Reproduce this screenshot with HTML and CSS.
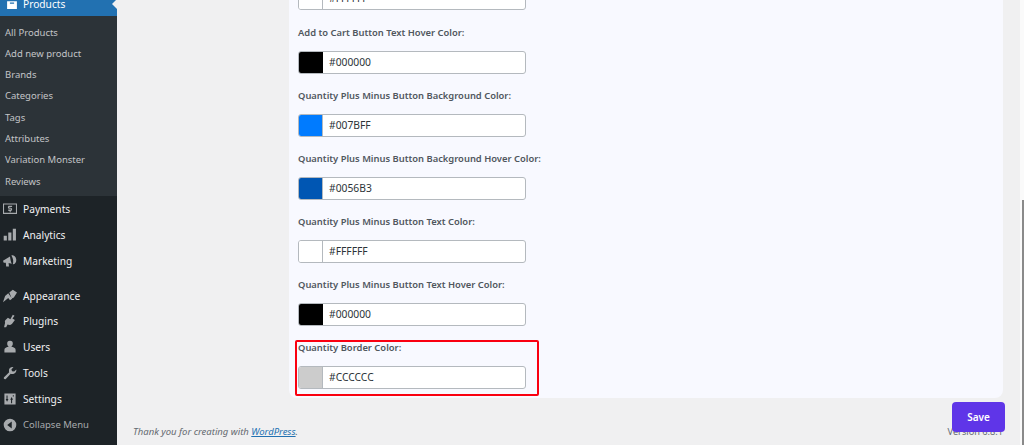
FILE: index.html
```html
<!DOCTYPE html>
<html lang="en">
<head>
<meta charset="utf-8">
<title>Settings</title>
<link rel="stylesheet" href="styles.css">
</head>
<body>
<aside class="sidebar">
  <div class="current">
    <svg class="icon" viewBox="0 0 20 20"><path d="M3 1h14v3H3zM3 6h14v11H3zM7 8v1.500h6V8z" fill-rule="evenodd"/></svg>
    <span>Products</span>
  </div>
  <ul class="submenu">
    <li>All Products</li>
    <li>Add new product</li>
    <li>Brands</li>
    <li>Categories</li>
    <li>Tags</li>
    <li>Attributes</li>
    <li>Variation Monster</li>
    <li>Reviews</li>
  </ul>
  <ul class="menu">
    <li><svg class="icon" viewBox="0 0 20 20"><path fill-rule="evenodd" d="M0 2h20v15H0zM1.500 3.500v12h17v-12zM13 5.500H9c-1.500 0-2 .8-2 2s.5 2.300 2 2.300h2.500v1H7.500v2H9.500V14.500h1.500V12.800c1.500 0 2-.8 2-2s-.5-2.500-2-2.500H9v-1h4z"/></svg>Payments</li>
    <li><svg class="icon" viewBox="0 0 20 20"><path d="M1 11h4.500v7H1zM7.500 6.500H12V18H7.500zM14 1h4.500v17H14z"/></svg>Analytics</li>
    <li class="gap"><svg class="icon" viewBox="0 0 20 20"><path d="M0 9.500l10-6c.5 3.500 1 7 2.500 10.500L8 12.800 8.500 18H4.500L4 12.500 1 12.500zM12 2c3.500-1 7 2.500 7 6.500s-2.500 6.500-5 6c1-3 1-8-2-12.500z"/></svg>Marketing</li>
    <li><svg class="icon" viewBox="0 0 20 20"><path d="M9 5l5-4 6 4-4.500 7-3 1.500zM7.500 6l5.500 8-3 2-2.500-3L0 19l3-9z"/></svg>Appearance</li>
    <li><svg class="icon" viewBox="0 0 20 20"><path d="M14 1l2.500 1.500-3 4 3.500 2-4 5.500c-2 2-4.500 2-6.500 1L4.500 19H1.500l1.500-6.500c-.8-2 0-3.300 1-4.300l3-3 3.500 2.300z"/></svg>Plugins</li>
    <li><svg class="icon" viewBox="0 0 20 20"><path d="M10 1a4 4 0 0 1 4 4.300c0 2-1 3.700-2.300 4.200 3.200.5 6.300 1.500 6.300 4.300V18H2v-4.200c0-2.800 3.100-3.800 6.300-4.300C7 9 6 7.300 6 5.300A4 4 0 0 1 10 1z"/></svg>Users</li>
    <li><svg class="icon" viewBox="0 0 20 20"><path d="M19 5l-3 3-3-.5L12 5l3-3.500c-3.500-.5-7 1.500-6.500 5.500 0 1 0 1.500.3 2L1.500 16c-1.500 1.500 1 4 2.500 2.500l7-7.300c.6.300 1.200.3 2 .3 4 0 6.500-3 6-6.500z"/></svg>Tools</li>
    <li><svg class="icon" viewBox="0 0 20 20"><path fill-rule="evenodd" d="M2 2h16v16H2zM5 5v5H3.800L5.800 14l2-4H6.500V5zM13 16v-5h1.300l-2-4-2 4h1.200v5zM14 4.500v2h1.500v-2z"/></svg>Settings</li>
    <li class="collapse"><svg class="icon" viewBox="0 0 20 20"><path fill-rule="evenodd" d="M10 1a9 9 0 1 1 0 18 9 9 0 0 1 0-18zM12.500 5L6 10l6.500 5z"/></svg>Collapse Menu</li>
  </ul>
</aside>
<main class="content">
  <section class="panel">
    <div class="field first">
      <div class="color-input"><span class="swatch white"></span><span class="value">#FFFFFF</span></div>
    </div>
    <div class="field">
      <label>Add to Cart Button Text Hover Color:</label>
      <div class="color-input"><span class="swatch black"></span><span class="value">#000000</span></div>
    </div>
    <div class="field">
      <label>Quantity Plus Minus Button Background Color:</label>
      <div class="color-input"><span class="swatch blue"></span><span class="value">#007BFF</span></div>
    </div>
    <div class="field">
      <label>Quantity Plus Minus Button Background Hover Color:</label>
      <div class="color-input"><span class="swatch darkblue"></span><span class="value">#0056B3</span></div>
    </div>
    <div class="field">
      <label>Quantity Plus Minus Button Text Color:</label>
      <div class="color-input"><span class="swatch white"></span><span class="value">#FFFFFF</span></div>
    </div>
    <div class="field">
      <label>Quantity Plus Minus Button Text Hover Color:</label>
      <div class="color-input"><span class="swatch black"></span><span class="value">#000000</span></div>
    </div>
    <div class="field highlighted">
      <label>Quantity Border Color:</label>
      <div class="color-input"><span class="swatch grey"></span><span class="value">#CCCCCC</span></div>
    </div>
  </section>
  <footer class="footer">
    <span class="thanks">Thank you for creating with <a href="#">WordPress</a>.</span>
    <span class="version">Version 6.8.1</span>
  </footer>
  <button class="save" type="button">Save</button>
</main>
<div class="scrollbar"><div class="thumb"></div></div>
</body>
</html>
```
FILE: styles.css
```css
*, *::before, *::after { box-sizing: border-box; }
html, body { height: 100%; }
body {
  margin: 0;
  height: 445px;
  overflow: hidden;
  display: flex;
  background: #f0f0f1;
  font-family: "Noto Sans", "Open Sans", sans-serif;
  color: #50575e;
}
.sidebar {
  width: 117px;
  flex: none;
  background: #1d2327;
  color: #f0f0f1;
  font-size: 10.2px;
}
.current {
  position: relative;
  height: 16px;
  background: #2271b1;
  color: #fff;
  display: flex;
  align-items: flex-end;
  padding-bottom: 5px;
  line-height: 14px;
}
.current::after {
  content: "";
  position: absolute;
  right: 0;
  top: -1px;
  border: 5px solid transparent;
  border-right-color: #f0f0f1;
  border-left-width: 0;
}
.current .icon { fill: #fff; margin: 0 4px 0 5px; }
.icon {
  width: 14px;
  height: 14px;
  margin: 0 6px 0 3px;
  fill: #a7aaad;
  flex: none;
}
.submenu, .menu { list-style: none; margin: 0; padding: 0; }
.submenu {
  height: 180px;
  padding-top: 5.500px;
  background: #2c3338;
  color: #c3c4c7;
  font-size: 9.500px;
}
.submenu li {
  height: 21.300px;
  line-height: 21.300px;
  padding-left: 5px;
}
.menu { padding-top: 0.500px; }
.menu li {
  height: 25.800px;
  display: flex;
  align-items: center;
}
.menu li.gap { margin-bottom: 8.800px; }
.menu li.collapse { color: #a7aaad; font-size: 9.500px; }
.content {
  position: relative;
  flex: 1;
  min-width: 0;
  padding-left: 172px;
}
.panel {
  position: relative;
  width: 714px;
  height: 398px;
  padding: 0 9px;
  background: #f8f9ff;
  border-radius: 0 0 8px 8px;
}
.field { height: 63px; padding-top: 13px; }
.field.first { height: 10px; padding-top: 0; display: flex; align-items: flex-end; margin-bottom: 3px; }
.field label {
  display: block;
  height: 25px;
  font-size: 9.400px;
  font-weight: 600;
  line-height: 14px;
  color: #50575e;
}
.color-input {
  width: 228px;
  height: 23px;
  display: flex;
  align-items: stretch;
  flex: none;
  background: #fff;
  border: 1px solid #b4b9be;
  border-radius: 3px;
  overflow: hidden;
}
.swatch { width: 24px; flex: none; border-right: 1px solid #b4b9be; }
.white { background: #fff; }
.black { background: #000; border-right-color: #000; }
.blue { background: #007bff; }
.darkblue { background: #0056b3; }
.grey { background: #cccccc; }
.value {
  padding-left: 6px;
  font-size: 10.300px;
  line-height: 21px;
  color: #2c3338;
}
.highlighted { position: relative; }
.highlighted::after {
  content: "";
  position: absolute;
  left: -3px;
  top: 12px;
  width: 244px;
  height: 56px;
  border: 2px solid #fa0010;
  border-radius: 2px;
}
.footer {
  position: absolute;
  left: 16px;
  right: 20px;
  top: 425px;
  display: flex;
  justify-content: space-between;
  font-size: 9.500px;
  line-height: 14px;
  color: #646970;
}
.thanks { font-style: italic; }
.thanks a { color: #2271b1; }
.version { font-size: 9.200px; margin-right: 1px; }
.save {
  position: absolute;
  left: 835px;
  top: 402px;
  width: 53px;
  height: 30px;
  padding: 0;
  border: 0;
  border-radius: 4px;
  background: #5f35e8;
  color: #fff;
  font: 600 10px "Noto Sans", "Open Sans", sans-serif;
}
.scrollbar {
  position: fixed;
  right: 0;
  top: 0;
  width: 4px;
  height: 445px;
  background: #fafafa;
}
.thumb {
  margin: 200px 0 0 2px;
  width: 2px;
  height: 245px;
  background: #8a8a8a;
}
```
